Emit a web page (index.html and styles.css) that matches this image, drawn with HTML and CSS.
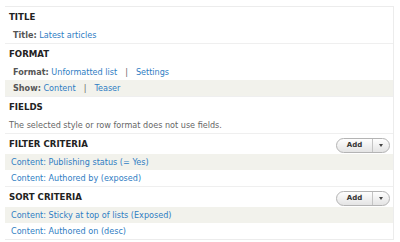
FILE: index.html
```html
<!DOCTYPE html>
<html lang="en">
<head>
  <meta charset="UTF-8">
  <title>Views display</title>
  <link rel="stylesheet" href="styles.css">
</head>
<body>
  <div class="display-panel">
    <div class="section">
      <h3 class="section-title">Title</h3>
      <div class="row"><span class="label">Title:</span> <a href="#">Latest articles</a></div>
    </div>
    <div class="section">
      <h3 class="section-title">Format</h3>
      <div class="row"><span class="label">Format:</span> <a href="#">Unformatted list</a><span class="sep">|</span><a href="#">Settings</a></div>
      <div class="row odd"><span class="label">Show:</span> <a href="#">Content</a><span class="sep">|</span><a href="#">Teaser</a></div>
    </div>
    <div class="section">
      <h3 class="section-title">Fields</h3>
      <div class="row note">The selected style or row format does not use fields.</div>
    </div>
    <div class="section">
      <div class="section-head">
        <h3 class="section-title">Filter criteria</h3>
        <div class="dropbutton"><span class="dropbutton-main">Add</span><span class="dropbutton-toggle"></span></div>
      </div>
      <div class="row link-row odd"><a href="#">Content: Publishing status (= Yes)</a></div>
      <div class="row link-row"><a href="#">Content: Authored by (exposed)</a></div>
    </div>
    <div class="section">
      <div class="section-head">
        <h3 class="section-title">Sort criteria</h3>
        <div class="dropbutton"><span class="dropbutton-main">Add</span><span class="dropbutton-toggle"></span></div>
      </div>
      <div class="row link-row odd"><a href="#">Content: Sticky at top of lists (Exposed)</a></div>
      <div class="row link-row"><a href="#">Content: Authored on (desc)</a></div>
    </div>
  </div>
</body>
</html>
```

FILE: styles.css
```css
body {
  font-family: "DejaVu Sans", Verdana, sans-serif;
  font-size: 8.1px;
  color: #333;
  background: #fff;
  margin: 0;
  padding: 6px 6px 0 5px;
}
a {
  color: #2f7dc3;
  text-decoration: none;
}
.display-panel {
  border: 1px solid #ececec;
  border-left: none;
}
.section {
  border-bottom: 1px solid #efefef;
}
.section:last-child {
  border-bottom: none;
}
.section-head {
  display: flex;
  align-items: center;
  justify-content: space-between;
  padding-right: 3px;
}
.section-title {
  margin: 0;
  height: 20px;
  line-height: 20px;
  padding-left: 4px;
  font-size: 8.6px;
  font-weight: bold;
  text-transform: uppercase;
  color: #222;
}
.row {
  height: 16px;
  line-height: 16px;
  padding-left: 8px;
}
.row.odd {
  background: #f2f2ec;
}
.link-row {
  padding-left: 6px;
}
.note {
  padding-left: 4px;
  color: #666;
}
.label {
  font-weight: bold;
  color: #555;
}
.sep {
  color: #666;
  padding: 0 8px;
}
.dropbutton {
  display: flex;
  height: 13px;
  width: 52px;
  border: 1px solid #b4b4b4;
  border-radius: 8px;
  background: linear-gradient(#fefefe, #e4e4e4);
  margin-top: 3px;
}
.dropbutton-main {
  flex: 1;
  text-align: center;
  font-weight: bold;
  font-size: 7px;
  line-height: 13px;
  color: #333;
  border-right: 1px solid #c4c4c4;
}
.dropbutton-toggle {
  width: 16px;
  position: relative;
}
.dropbutton-toggle::after {
  content: "";
  position: absolute;
  left: 6px;
  top: 5px;
  border-left: 2.5px solid transparent;
  border-right: 2.5px solid transparent;
  border-top: 3px solid #444;
}
```
